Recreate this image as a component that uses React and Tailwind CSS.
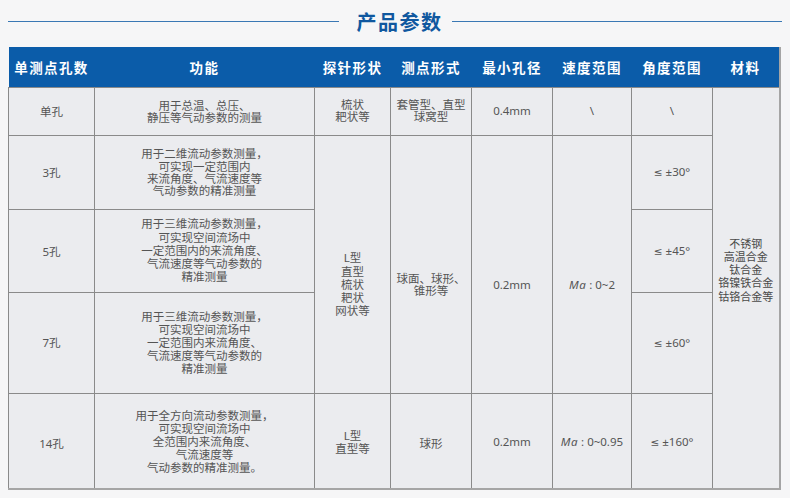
import React from 'react';

// Column widths measured from the reference table (px)
const cols = [86, 220, 76, 81, 81, 79, 81, 67];

const heads = ['单测点孔数', '功能', '探针形状', '测点形式', '最小孔径', '速度范围', '角度范围', '材料'];

const cell = 'border border-[#8a8a8a] text-center align-middle p-0';

function Ma({ value }) {
  return (
    <span>
      <i className="tracking-[0.5px]">Ma</i> : {value}
    </span>
  );
}

function Angle({ value }) {
  return (
    <span>
      <span className="text-[10.5px]" style={{ fontFamily: '"DejaVu Sans", sans-serif' }}>≤</span> ±{value}°
    </span>
  );
}

export default function App() {
  return (
    <div
      className="w-[790px] h-[498px] bg-[#f6f6f7] overflow-hidden"
      style={{ fontFamily: '"Noto Sans", "Noto Sans CJK SC", sans-serif' }}
    >
      {/* Section title with side rules */}
      <div className="h-[43px] flex items-center px-[8px]">
        <div className="flex-1 h-[1.5px] bg-[#3a78b4]" />
        <h2
          className="ml-[18px] mr-[9px] text-[20px] font-bold tracking-[1.5px] text-[#10589f] leading-none"
          style={{ fontFamily: '"Noto Sans CJK SC", sans-serif' }}
        >
          产品参数
        </h2>
        <div className="flex-1 h-[1.5px] bg-[#3a78b4]" />
      </div>

      <table
        className="ml-[8px] mt-[4px] table-fixed border-collapse text-[#555] text-[11.5px] border-r-2 border-b-2 border-[#a5a5a5]"
        style={{ width: 771 }}
      >
        <colgroup>
          {cols.map((w, i) => (
            <col key={i} style={{ width: w }} />
          ))}
        </colgroup>
        <thead>
          <tr className="h-[40px] bg-[#0b5ca9]">
            {heads.map((h) => (
              <th
                key={h}
                className="p-0 text-center align-middle text-white font-bold text-[13.5px] tracking-[1.4px]"
                style={{ fontFamily: '"Noto Sans CJK SC", sans-serif' }}
              >
                {h}
              </th>
            ))}
          </tr>
        </thead>
        <tbody className="bg-[#ebecef]">
          <tr className="h-[48px]">
            <td className={`${cell} pt-[2px]`}>单孔</td>
            <td className={`${cell} pt-[2px] leading-[12px]`}>
              用于总温、总压、<br />静压等气动参数的测量
            </td>
            <td className={`${cell} leading-[12.5px]`}>
              梳状<br />耙状等
            </td>
            <td className={`${cell} leading-[12.5px]`}>
              套管型、直型<br />球窝型
            </td>
            <td className={cell}>0.4mm</td>
            <td className={cell}>\</td>
            <td className={cell}>\</td>
            <td rowSpan={5} className={`${cell} pb-[36px] text-[11px] leading-[13.3px] text-[#4a4a4a]`}>
              不锈钢<br />高温合金<br />钛合金<br />铬镍铁合金<br />钴铬合金等
            </td>
          </tr>
          <tr className="h-[74px]">
            <td className={`${cell} pt-[2px]`}>3孔</td>
            <td className={`${cell} pt-[2px] leading-[12.3px]`}>
              用于二维流动参数测量，<br />可实现一定范围内<br />来流角度、气流速度等<br />气动参数的精准测量
            </td>
            <td rowSpan={3} className={`${cell} pt-[41px] leading-[13.3px]`}>
              L型<br />直型<br />梳状<br />耙状<br />网状等
            </td>
            <td rowSpan={3} className={`${cell} pt-[41px] leading-[12px]`}>
              球面、球形、<br />锥形等
            </td>
            <td rowSpan={3} className={`${cell} pt-[41px]`}>0.2mm</td>
            <td rowSpan={3} className={`${cell} pt-[41px]`}>
              <Ma value="0~2" />
            </td>
            <td className={cell}><Angle value="30" /></td>
          </tr>
          <tr className="h-[83px]">
            <td className={`${cell} pt-[2px]`}>5孔</td>
            <td className={`${cell} leading-[13.3px]`}>
              用于三维流动参数测量，<br />可实现空间流场中<br />一定范围内的来流角度、<br />气流速度等气动参数的<br />精准测量
            </td>
            <td className={cell}><Angle value="45" /></td>
          </tr>
          <tr className="h-[101px]">
            <td className={cell}>7孔</td>
            <td className={`${cell} leading-[13px]`}>
              用于三维流动参数测量，<br />可实现空间流场中<br />一定范围内来流角度、<br />气流速度等气动参数的<br />精准测量
            </td>
            <td className={cell}><Angle value="60" /></td>
          </tr>
          <tr className="h-[96px]">
            <td className={`${cell} pt-[5px]`}>14孔</td>
            <td className={`${cell} pt-[3px] leading-[12.9px]`}>
              用于全方向流动参数测量，<br />可实现空间流场中<br />全范围内来流角度、<br />气流速度等<br />气动参数的精准测量。
            </td>
            <td className={`${cell} pt-[3px] leading-[13.3px]`}>
              L型<br />直型等
            </td>
            <td className={`${cell} pt-[5px]`}>球形</td>
            <td className={`${cell} pt-[2px]`}>0.2mm</td>
            <td className={`${cell} pt-[2px]`}>
              <Ma value="0~0.95" />
            </td>
            <td className={`${cell} pt-[2px]`}><Angle value="160" /></td>
          </tr>
        </tbody>
      </table>
    </div>
  );
}
